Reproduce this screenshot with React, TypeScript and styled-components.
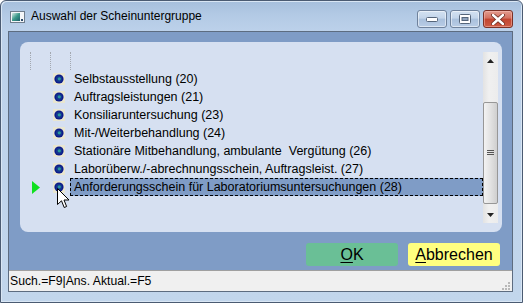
import React from "react";
import styled, { createGlobalStyle, css } from "styled-components";

const Global = createGlobalStyle`
  html, body { margin: 0; padding: 0; width: 523px; height: 303px; overflow: hidden; background: #fff; }
  * { box-sizing: border-box; }
`;

const Window = styled.div`
  width: 523px;
  height: 303px;
  border: 1px solid #4b5b72;
  border-radius: 6px 6px 0 0;
  background: linear-gradient(to bottom, #a6bfdc 0px, #b3cae5 14px, #bcd1ea 30px, #c2d6ec 100%);
  display: flex;
  flex-direction: column;
  box-shadow: inset 1px 1px 0 #d9e6f4, inset -1px -1px 0 #d9e6f4;
`;

const TitleBar = styled.div`
  height: 30px;
  display: flex;
  align-items: flex-start;
  padding-left: 9px;
`;

const TitleIcon = styled.svg`
  margin-top: 10px;
  flex: none;
`;

const TitleText = styled.span`
  margin-left: 6px;
  margin-top: 8px;
  font-family: "Liberation Sans", Arial, sans-serif;
  font-size: 12px;
  line-height: 15px;
  color: #000;
`;

const Controls = styled.div`
  margin-left: auto;
  margin-right: 9px;
  margin-top: 9px;
  display: flex;
  gap: 3px;
`;

const CtlButton = styled.div<{ $close?: boolean }>`
  width: 30px;
  height: 18px;
  border: 1px solid #6f829c;
  border-radius: 3px;
  display: flex;
  align-items: center;
  justify-content: center;
  background: linear-gradient(to bottom, #d3e1f1 0%, #c3d5ea 45%, #a9c0dc 50%, #b9cde6 100%);
  box-shadow: inset 0 0 0 1px rgba(255, 255, 255, 0.5);
  ${(p) =>
    p.$close &&
    css`
      border-color: #7b3127;
      background: linear-gradient(to bottom, #e29c8f 0%, #d4705f 45%, #c2442f 50%, #cd5b44 100%);
      box-shadow: inset 0 0 0 1px rgba(255, 200, 190, 0.45);
    `}
`;

const Client = styled.div`
  flex: 1;
  margin: 0 9px 10px 7px;
  border: 1px solid #5d6c80;
  display: flex;
  flex-direction: column;
`;

const BlueArea = styled.div`
  flex: 1;
  background: #7f9cc6;
  padding: 10px 10px 0 11px;
  display: flex;
  flex-direction: column;
`;

const Panel = styled.div`
  height: 190px;
  background: #d6e0f1;
  border-radius: 8px;
  padding: 10px 4px 9px 10px;
  display: flex;
`;

const TreeArea = styled.div`
  flex: 1;
  position: relative;
  display: flex;
  flex-direction: column;
`;

const GuideRow = styled.div`
  height: 18px;
  display: flex;
  flex: none;
`;

const Guide = styled.div`
  width: 20px;
  height: 18px;
  border-left: 1px dotted #a3a8b0;
`;

const Row = styled.div`
  height: 18px;
  display: flex;
  align-items: center;
  flex: none;
`;

const Indicator = styled.div`
  width: 20px;
  height: 18px;
  display: flex;
  align-items: center;
  padding-left: 2px;
`;

const BulletCell = styled.div`
  width: 20px;
  height: 18px;
  display: flex;
  align-items: center;
  padding-left: 3px;
`;

const Label = styled.div<{ $selected?: boolean }>`
  flex: 1;
  height: 18px;
  padding-left: 3px;
  font-family: "Liberation Sans", Arial, sans-serif;
  font-size: 12.5px;
  line-height: 16px;
  color: #000;
  white-space: pre;
  border: 1px solid transparent;
  ${(p) =>
    p.$selected &&
    css`
      background: #7f9cc6;
      border: 1px dashed #000;
    `}
`;

const Cursor = styled.svg`
  position: absolute;
  left: 27px;
  top: 136px;
`;

const ScrollBar = styled.div`
  width: 15px;
  display: flex;
  flex-direction: column;
  background: linear-gradient(to right, #e3e3e3, #f0f0f0 40%, #ececec);
`;

const ArrowBtn = styled.div`
  height: 17px;
  display: flex;
  align-items: center;
  justify-content: center;
`;

const Track = styled.div`
  flex: 1;
  padding-top: 33px;
  display: flex;
  flex-direction: column;
`;

const Thumb = styled.div`
  height: 102px;
  border: 1px solid #979797;
  border-radius: 2px;
  background: linear-gradient(to right, #f3f3f3, #e2e2e2 50%, #cfcfcf);
  display: flex;
  align-items: center;
  justify-content: center;
`;

const ButtonRow = styled.div`
  margin-top: 11px;
  display: flex;
  justify-content: flex-end;
  gap: 10px;
  padding-right: 2px;
`;

const DlgButton = styled.div<{ $bg: string }>`
  width: 92px;
  height: 23px;
  border-radius: 3px;
  background: ${(p) => p.$bg};
  font-family: "Liberation Sans", Arial, sans-serif;
  font-size: 16px;
  line-height: 23px;
  text-align: center;
  color: #000;
  u { text-decoration: underline; text-underline-offset: 2px; }
`;

const StatusBar = styled.div`
  height: 21px;
  flex: none;
  background: #f0f0f0;
  border-top: 1px solid #a0a0a0;
  padding-left: 1px;
  display: flex;
  align-items: center;
  position: relative;
  font-family: "Liberation Sans", Arial, sans-serif;
  font-size: 12.2px;
  color: #000;
`;

const Grip = styled.svg`
  position: absolute;
  right: 2px;
  bottom: 1px;
`;

const Bullet = () => (
  <svg width="12" height="12" viewBox="0 0 12 12">
    <rect x="0" y="0" width="12" height="12" fill="#e9e6cf" />
    <circle cx="6" cy="6" r="4.6" fill="#0c1a8a" />
    <circle cx="6" cy="6" r="3.2" fill="#13348f" />
    <circle cx="6.3" cy="5.8" r="1.6" fill="#2a9a9a" />
  </svg>
);

const items = [
  "Selbstausstellung (20)",
  "Auftragsleistungen (21)",
  "Konsiliaruntersuchung (23)",
  "Mit-/Weiterbehandlung (24)",
  "Stationäre Mitbehandlung, ambulante  Vergütung (26)",
  "Laborüberw./-abrechnungsschein, Auftragsleist. (27)",
  "Anforderungsschein für Laboratoriumsuntersuchungen (28)",
];

export default function App() {
  return (
    <>
      <Global />
      <Window>
        <TitleBar>
          <TitleIcon width="15" height="12" viewBox="0 0 15 12">
            <defs>
              <linearGradient id="ti" x1="0" y1="0" x2="1" y2="1">
                <stop offset="0" stopColor="#d8ece8" />
                <stop offset="0.5" stopColor="#3c9a8a" />
                <stop offset="1" stopColor="#1b5e6a" />
              </linearGradient>
            </defs>
            <rect x="0.5" y="0.5" width="14" height="11" fill="#f4f6f8" stroke="#6f7d8c" />
            <rect x="2" y="2" width="8" height="8" fill="url(#ti)" />
            <rect x="11" y="8" width="2" height="2" fill="#2a4a6a" />
          </TitleIcon>
          <TitleText>Auswahl der Scheinuntergruppe</TitleText>
          <Controls>
            <CtlButton>
              <svg width="12" height="6" viewBox="0 0 12 6">
                <rect x="0.5" y="1.5" width="11" height="4" rx="1" fill="#fff" stroke="#55657a" />
              </svg>
            </CtlButton>
            <CtlButton>
              <svg width="12" height="10" viewBox="0 0 12 10">
                <rect x="0.5" y="0.5" width="11" height="9" rx="1" fill="#fff" stroke="#55657a" />
                <rect x="3" y="3.5" width="6" height="3" fill="#8fa3bd" stroke="#55657a" />
              </svg>
            </CtlButton>
            <CtlButton $close>
              <svg width="14" height="11" viewBox="0 0 14 11">
                <path d="M2 1 L12 10 M12 1 L2 10" stroke="#6a2a20" strokeWidth="4" strokeLinecap="round" />
                <path d="M2 1 L12 10 M12 1 L2 10" stroke="#fff" strokeWidth="2.4" strokeLinecap="round" />
              </svg>
            </CtlButton>
          </Controls>
        </TitleBar>
        <Client>
          <BlueArea>
            <Panel>
              <TreeArea>
                <GuideRow>
                  <Guide />
                  <Guide />
                  <Guide />
                </GuideRow>
                {items.map((t, i) => {
                  const sel = i === items.length - 1;
                  return (
                    <Row key={t}>
                      <Indicator>
                        {sel && (
                          <svg width="8" height="13" viewBox="0 0 8 13">
                            <path d="M0 0 L8 6.5 L0 13 Z" fill="#10e020" />
                          </svg>
                        )}
                      </Indicator>
                      <BulletCell>
                        <Bullet />
                      </BulletCell>
                      <Label $selected={sel}>{t}</Label>
                    </Row>
                  );
                })}
                <Cursor width="13" height="21" viewBox="0 0 13 21">
                  <path
                    d="M0.5 0.5 L0.5 16.5 L4.5 12.8 L7.2 19.5 L9.6 18.5 L7 12 L12 12 Z"
                    fill="#fff"
                    stroke="#000"
                    strokeWidth="1"
                    strokeLinejoin="miter"
                  />
                </Cursor>
              </TreeArea>
              <ScrollBar>
                <ArrowBtn>
                  <svg width="7" height="4" viewBox="0 0 7 4">
                    <path d="M0 4 L3.5 0 L7 4 Z" fill="#222" />
                  </svg>
                </ArrowBtn>
                <Track>
                  <Thumb>
                    <svg width="7" height="6" viewBox="0 0 7 6">
                      <path d="M0 0.5 H7 M0 2.5 H7 M0 4.5 H7" stroke="#555" strokeWidth="1" />
                    </svg>
                  </Thumb>
                </Track>
                <ArrowBtn>
                  <svg width="7" height="4" viewBox="0 0 7 4">
                    <path d="M0 0 L3.5 4 L7 0 Z" fill="#222" />
                  </svg>
                </ArrowBtn>
              </ScrollBar>
            </Panel>
            <ButtonRow>
              <DlgButton $bg="#6abf96">
                <u>O</u>K
              </DlgButton>
              <DlgButton $bg="#ffff80">
                <u>A</u>bbrechen
              </DlgButton>
            </ButtonRow>
          </BlueArea>
          <StatusBar>
            Such.=F9|Ans. Aktual.=F5
            <Grip width="8" height="8" viewBox="0 0 8 8">
              <rect x="6" y="0" width="2" height="2" fill="#b8b8b8" />
              <rect x="3" y="3" width="2" height="2" fill="#b8b8b8" />
              <rect x="6" y="3" width="2" height="2" fill="#b8b8b8" />
              <rect x="0" y="6" width="2" height="2" fill="#b8b8b8" />
              <rect x="3" y="6" width="2" height="2" fill="#b8b8b8" />
              <rect x="6" y="6" width="2" height="2" fill="#b8b8b8" />
            </Grip>
          </StatusBar>
        </Client>
      </Window>
    </>
  );
}
